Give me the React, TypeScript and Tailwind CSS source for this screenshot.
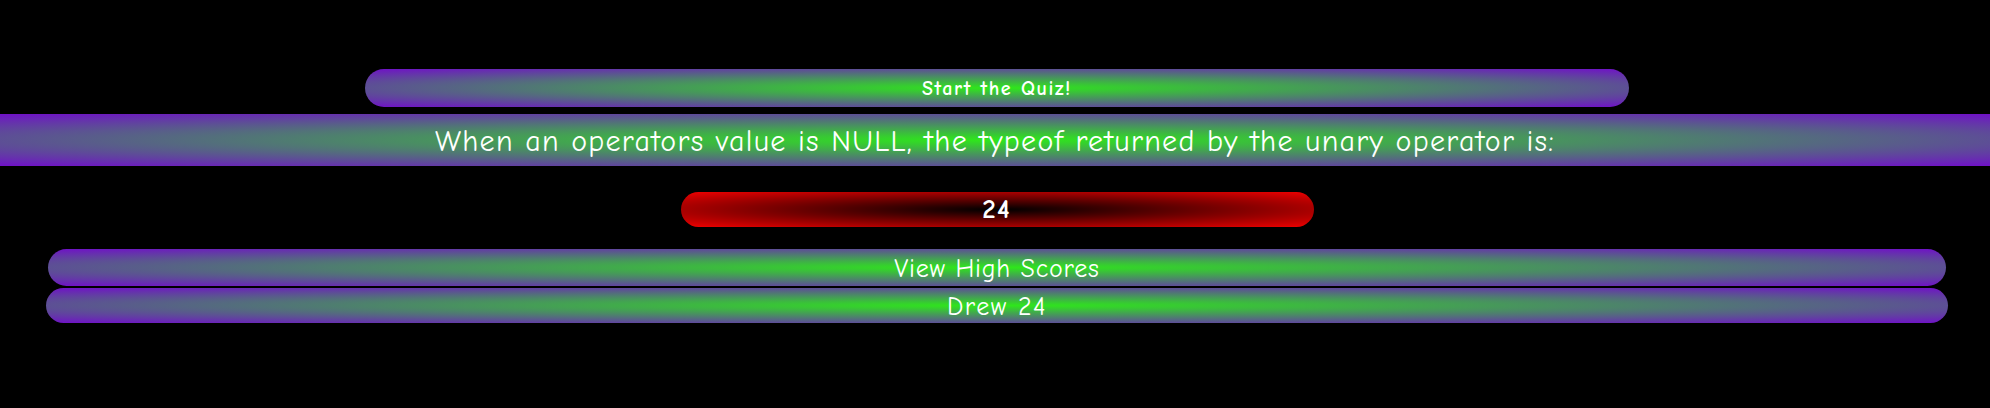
import React from "react";

const green = "bg-[radial-gradient(#2ee81a,#7010c8)]";

export default function App() {
  return (
    <div
      className="min-h-[408px] w-full bg-black flex flex-col items-center text-white"
      style={{ fontFamily: "'Comic Sans MS', 'Comic Neue', Lato, sans-serif" }}
    >
      <button
        className={`mt-[69px] ml-[4px] w-[1264px] h-[38px] pt-[2px] rounded-full ${green} flex items-center justify-center text-[20px] font-bold tracking-[1.6px]`}
      >
        Start the Quiz!
      </button>
      <div
        className={`mt-[7px] w-full h-[52px] pt-[2px] ${green} flex items-center justify-center text-[30px] tracking-[1.3px]`}
      >
        When an operators value is NULL, the typeof returned by the unary operator is:
      </div>
      <div className="mt-[26px] ml-[4px] w-[633px] h-[35px] pt-[2px] rounded-full bg-[radial-gradient(#000000,#f00000)] flex items-center justify-center text-[27px] font-bold tracking-[2px]">
        24
      </div>
      <button
        className={`mt-[22px] ml-[4px] w-[1898px] h-[37px] pt-[3px] rounded-full ${green} flex items-center justify-center text-[26px] tracking-[0.8px]`}
      >
        View High Scores
      </button>
      <div
        className={`mt-[2px] ml-[4px] w-[1902px] h-[35px] pt-[3px] rounded-full ${green} flex items-center justify-center text-[26px] tracking-[1.5px]`}
      >
        Drew 24
      </div>
    </div>
  );
}
